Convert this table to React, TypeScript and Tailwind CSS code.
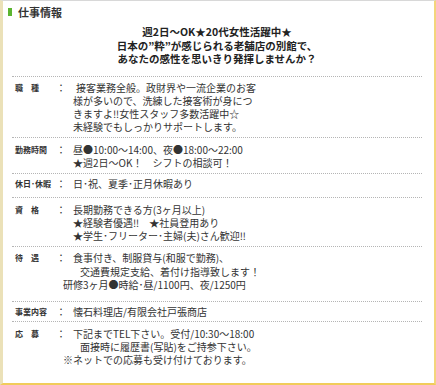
import React from "react";

type Line = { t: string; cls?: string };
type Row = { label: string; lines: Line[]; pad: string };

const rows: Row[] = [
  {
    label: "職　種",
    pad: "pt-[4px] pb-[3px]",
    lines: [
      { t: "接客業務全般。政財界や一流企業のお客", cls: "pl-[3px]" },
      { t: "様が多いので、洗練した接客術が身につ" },
      { t: "きますよ‼女性スタッフ多数活躍中☆" },
      { t: "未経験でもしっかりサポートします。" },
    ],
  },
  {
    label: "勤務時間",
    pad: "pt-[5px] pb-[4px]",
    lines: [
      { t: "昼●10:00～14:00、夜●18:00～22:00" },
      { t: "★週2日～OK！　シフトの相談可！" },
    ],
  },
  {
    label: "休日･休暇",
    pad: "pt-[3px] pb-[6px]",
    lines: [{ t: "日･祝、夏季･正月休暇あり" }],
  },
  {
    label: "資　格",
    pad: "pt-[5px] pb-[4px]",
    lines: [
      { t: "長期勤務できる方(3ヶ月以上)" },
      { t: "★経験者優遇‼　★社員登用あり" },
      { t: "★学生･フリーター･主婦(夫)さん歓迎‼" },
    ],
  },
  {
    label: "待　遇",
    pad: "pt-[4px] pb-[10px]",
    lines: [
      { t: "食事付き、制服貸与(和服で勤務)、" },
      { t: "交通費規定支給、着付け指導致します！", cls: "pl-[7px]" },
      { t: "研修3ヶ月●時給･昼/1100円、夜/1250円", cls: "ml-[-10px]" },
    ],
  },
  {
    label: "事業内容",
    pad: "pt-[3px] pb-[2px]",
    lines: [{ t: "懐石料理店/有限会社戸張商店" }],
  },
  {
    label: "応　募",
    pad: "pt-[5px] pb-[4px]",
    lines: [
      { t: "下記までTEL下さい。受付/10:30～18:00" },
      { t: "面接時に履歴書(写貼)をご持参下さい。", cls: "pl-[7px]" },
      { t: "※ネットでの応募も受け付けております。", cls: "ml-[-10px]" },
    ],
  },
];

export default function App() {
  return (
    <div className="w-[436px] h-[385px] overflow-hidden bg-white font-['Noto_Sans_CJK_JP','Noto_Sans_CJK_SC',sans-serif] text-[#333]">
      <div className="w-full h-full flex flex-col border-l-[3px] border-l-[#ebe1b8] border-t border-t-[#d8d8d8] border-r-2 border-r-[#f3d57c] border-b-2 border-b-[#f1cc5a] pl-[9px] pr-[12px]">
        <div className="flex items-center h-[14px] mt-[4px]">
          <div className="w-[4px] h-[8px] bg-[#5cb531] ml-[-4px]" />
          <div className="ml-[6px] text-[11px] leading-[14px] font-bold text-[#333]">仕事情報</div>
        </div>
        <div className="mt-[6px] pb-[10px] border-b border-dotted border-b-[#b5b5b5] text-center text-[10.5px] leading-[13.5px] font-bold text-[#222]">
          <div>週2日～OK★20代女性活躍中★</div>
          <div>日本の”粋”が感じられる老舗店の別館で、</div>
          <div>あなたの感性を思いきり発揮しませんか？</div>
        </div>
        {rows.map((r, i) => (
          <div
            key={i}
            className={`flex ${r.pad} ${i < rows.length - 1 ? "border-b border-dotted border-b-[#b5b5b5]" : ""}`}
          >
            <div className="w-[44px] pl-[3px] text-[8px] leading-[13.3px] font-bold text-[#333] whitespace-nowrap">
              {r.label}
            </div>
            <div className="w-[10px] text-center text-[10px] leading-[13.3px]">：</div>
            <div className="pl-[7px] text-[10px] leading-[13.3px] text-[#333]">
              {r.lines.map((l, j) => (
                <div key={j} className={`whitespace-nowrap ${l.cls ?? ""}`}>
                  {l.t}
                </div>
              ))}
            </div>
          </div>
        ))}
      </div>
    </div>
  );
}
